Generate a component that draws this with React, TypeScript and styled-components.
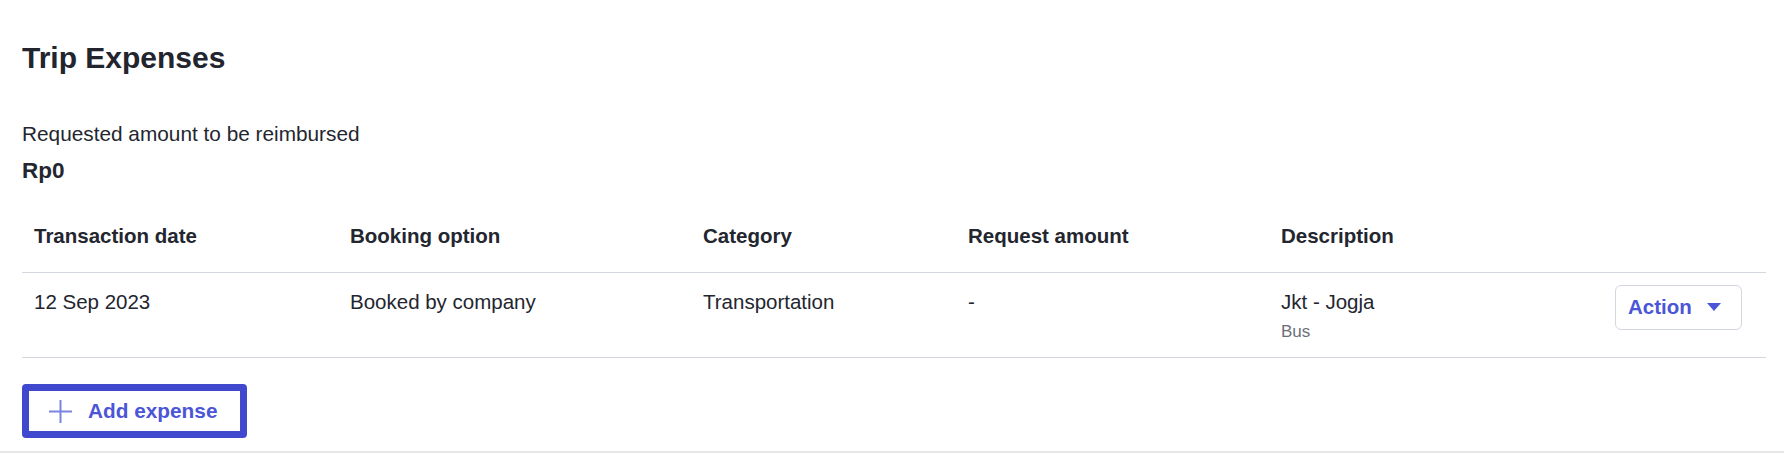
import styled, { createGlobalStyle } from "styled-components";

const GlobalStyle = createGlobalStyle`
  body {
    margin: 0;
    background: #ffffff;
    font-family: "Liberation Sans", Arial, sans-serif;
    color: #23262f;
  }
`;

// column widths taken from the table layout
const COLUMNS = "316px 353px 265px 313px 1fr auto";

const Section = styled.section`
  padding: 40px 18px 13px 22px;
  border-bottom: 2px solid #e6e6e6;
`;

const Title = styled.h2`
  margin: 0;
  font-size: 30px;
  line-height: 36px;
  font-weight: 700;
  color: #22252e;
`;

const Summary = styled.div`
  margin-top: 43px;
  display: flex;
  flex-direction: column;
  gap: 5px;
`;

const SummaryLabel = styled.div`
  font-size: 20.8px;
  line-height: 30.75px;
`;

const SummaryValue = styled.div`
  font-size: 22.5px;
  font-weight: 700;
  line-height: 32px;
`;

const Table = styled.div`
  margin-top: 14px;
  display: grid;
  grid-template-columns: ${COLUMNS};
`;

const HeadCell = styled.div`
  padding: 20px 12px;
  font-size: 20.5px;
  font-weight: 700;
  line-height: 30.75px;
  border-bottom: 1px solid #d3d7e0;
`;

const Cell = styled.div<{ $end?: boolean }>`
  padding: 14px ${({ $end }) => ($end ? "24px" : "12px")} 12px 12px;
  font-size: 20.5px;
  line-height: 30.75px;
  border-bottom: 1px solid #d3d7e0;
  display: flex;
  flex-direction: column;
  align-items: ${({ $end }) => ($end ? "flex-end" : "flex-start")};
`;

const SubText = styled.span`
  margin-top: 1px;
  font-size: 17px;
  line-height: 27px;
  color: #6b6f7a;
`;

const ActionButton = styled.button`
  margin-top: -2px;
  width: 127px;
  height: 45px;
  padding: 0 20px 0 12px;
  display: flex;
  align-items: center;
  justify-content: space-between;
  background: #fff;
  border: 1px solid #d3d7e0;
  border-radius: 6px;
  font-family: inherit;
  font-size: 20.5px;
  font-weight: 700;
  color: #4b55d8;
`;

const Caret = styled.span`
  width: 0;
  height: 0;
  border-left: 7.5px solid transparent;
  border-right: 7.5px solid transparent;
  border-top: 8px solid #4b55d8;
`;

const AddButton = styled.button`
  margin-top: 26px;
  height: 54px;
  width: 225px;
  box-sizing: border-box;
  padding: 0 0 0 19px;
  display: flex;
  align-items: center;
  gap: 15px;
  background: #fff;
  border: 7px solid #4048cd;
  border-radius: 4px;
  font-family: inherit;
  font-size: 20.8px;
  font-weight: 700;
  color: #4b55d8;
`;

const PlusIcon = () => (
  <svg width="25" height="25" viewBox="0 0 25 25" fill="none">
    <path d="M12.5 1v23M1 12.5h23" stroke="#7a83e2" strokeWidth="2" />
  </svg>
);

const headers = [
  "Transaction date",
  "Booking option",
  "Category",
  "Request amount",
  "Description",
  "",
];

const expenses = [
  {
    date: "12 Sep 2023",
    booking: "Booked by company",
    category: "Transportation",
    amount: "-",
    description: "Jkt - Jogja",
    detail: "Bus",
  },
];

const App = () => {
  return (
    <>
      <GlobalStyle />
      <Section>
        <Title>Trip Expenses</Title>

        <Summary>
          <SummaryLabel>Requested amount to be reimbursed</SummaryLabel>
          <SummaryValue>Rp0</SummaryValue>
        </Summary>

        <Table>
          {headers.map((h, i) => (
            <HeadCell key={i}>{h}</HeadCell>
          ))}
          {expenses.map((e, i) => (
            <div key={i} style={{ display: "contents" }}>
              <Cell>{e.date}</Cell>
              <Cell>{e.booking}</Cell>
              <Cell>{e.category}</Cell>
              <Cell>{e.amount}</Cell>
              <Cell>
                <span>{e.description}</span>
                <SubText>{e.detail}</SubText>
              </Cell>
              <Cell $end>
                <ActionButton>
                  Action
                  <Caret />
                </ActionButton>
              </Cell>
            </div>
          ))}
        </Table>

        <AddButton>
          <PlusIcon />
          Add expense
        </AddButton>
      </Section>
    </>
  );
};

export default App;
